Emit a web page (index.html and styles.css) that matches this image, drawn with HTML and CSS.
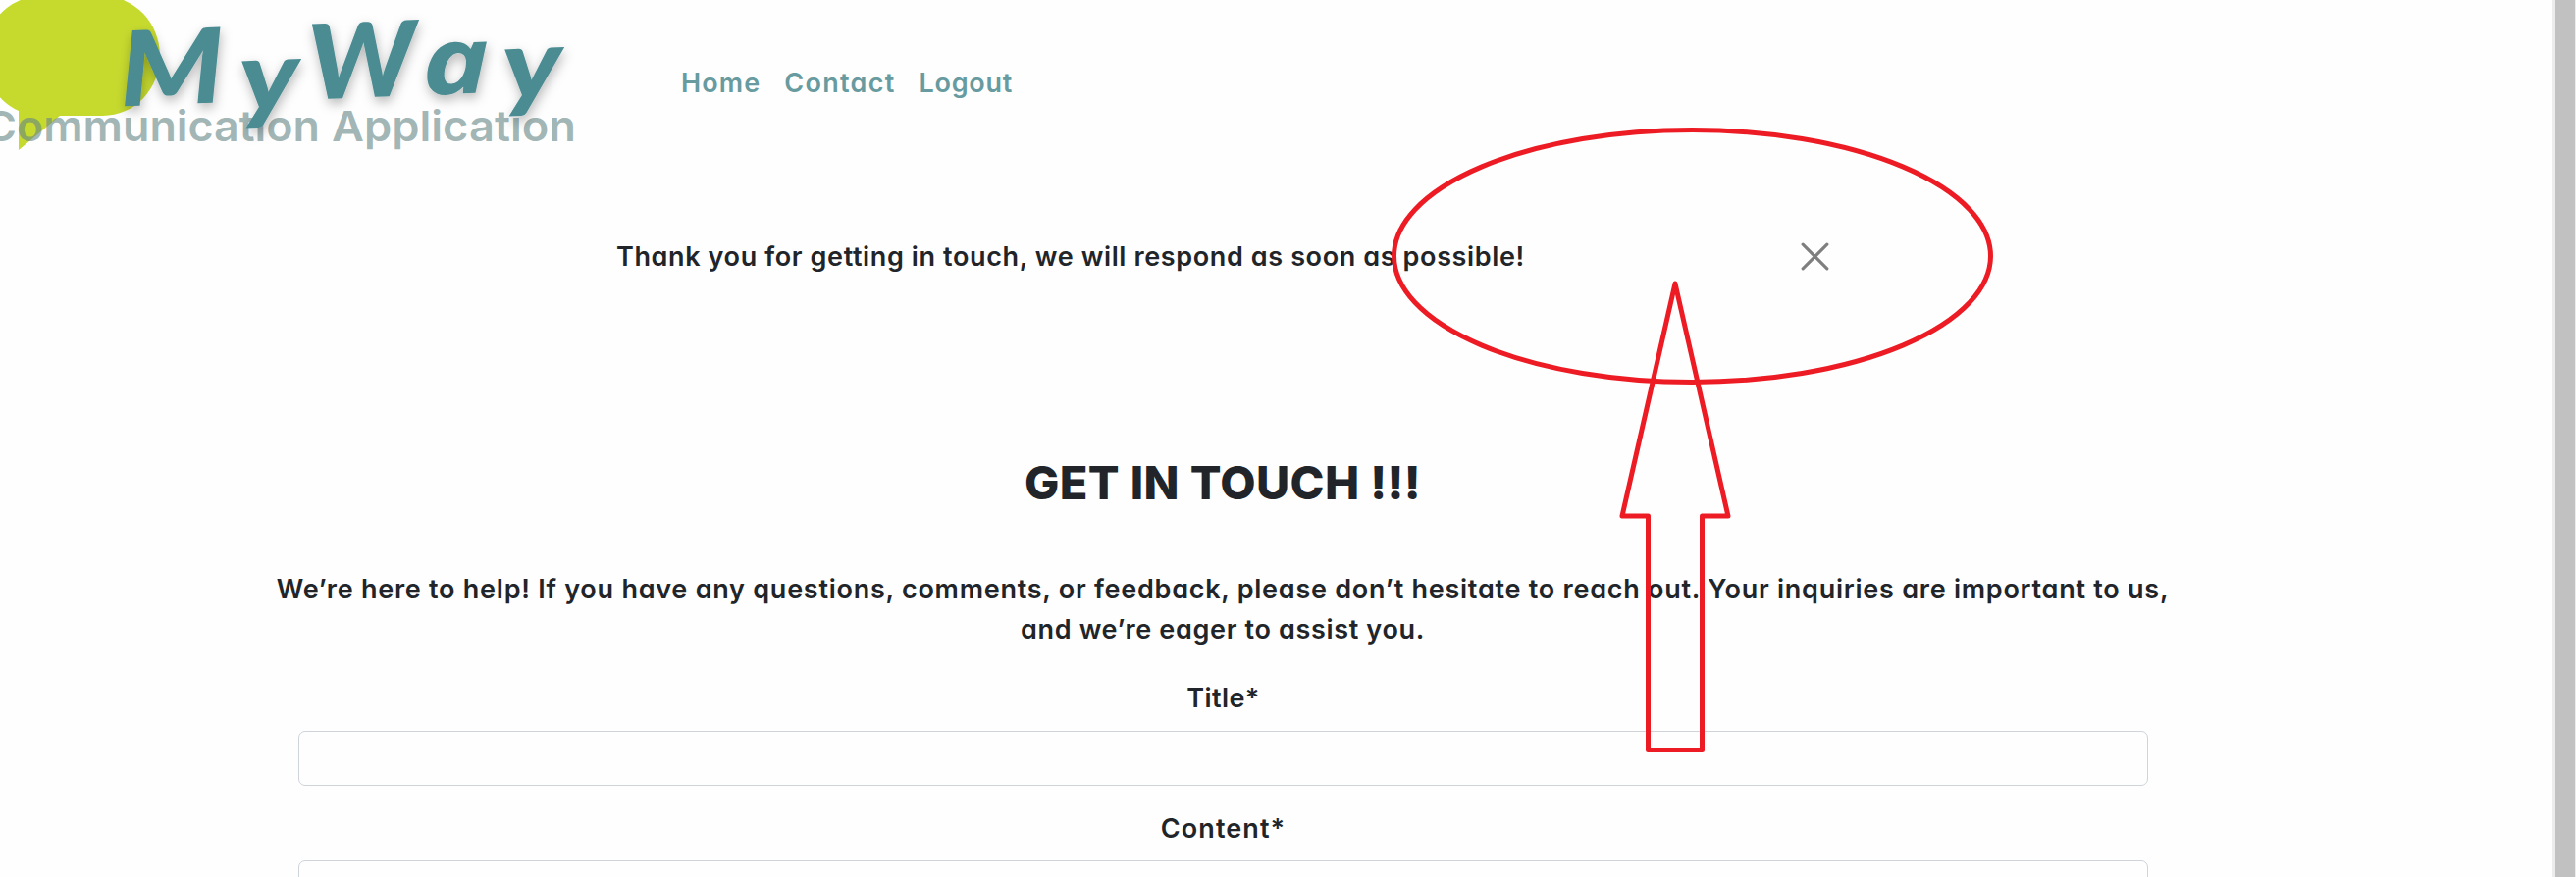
FILE: index.html
```html
<!DOCTYPE html>
<html lang="en">
<head>
<meta charset="utf-8">
<title>MyWay - Contact</title>
<link rel="stylesheet" href="styles.css">
</head>
<body>
<div class="page">
  <header class="header">
    <svg class="logo" width="600" height="168" viewBox="0 0 600 168" role="img" aria-label="MyWay Communication Application">
      <defs>
        <filter id="shade" x="-10%" y="-20%" width="120%" height="150%"><feDropShadow dx="1" dy="5" stdDeviation="6" flood-color="#000" flood-opacity=".28"/></filter>
      </defs>
      <path class="bubble" d="M45-4H105A58 61 0 0 1 105 118H61L19 153V113A58 61 0 0 1 45-4Z"/>
      <g class="tagline">
        <text x="-16" y="143.5" textLength="342" lengthAdjust="spacingAndGlyphs">Communication</text>
        <text x="338" y="143.5" textLength="249" lengthAdjust="spacingAndGlyphs">Application</text>
      </g>
      <g class="brand" filter="url(#shade)">
        <text transform="translate(123 108.5) rotate(-2.3)" textLength="107" lengthAdjust="spacingAndGlyphs">M</text>
        <text class="tail" transform="translate(245 114) rotate(-2.3)" textLength="61" lengthAdjust="spacingAndGlyphs">y</text>
        <text transform="translate(315 101.5) rotate(-2.3)" textLength="110" lengthAdjust="spacingAndGlyphs">W</text>
        <text class="round" transform="translate(431 97) rotate(-2.3)" textLength="69" lengthAdjust="spacingAndGlyphs">a</text>
        <text class="tail" transform="translate(513 102) rotate(-2.3)" textLength="61" lengthAdjust="spacingAndGlyphs">y</text>
      </g>
    </svg>
    <nav class="nav"><a class="home">Home</a><a class="contact">Contact</a><a class="logout">Logout</a></nav>
  </header>
  <section class="alert">
    <p class="message">Thank you for getting in touch, we will respond as soon as possible!</p>
    <svg class="close" viewBox="0 0 16 16"><path d="M.7.7 15.3 15.3M15.3.7.7 15.3"/></svg>
  </section>
  <main class="content">
    <h1 class="heading">GET IN TOUCH !!!</h1>
    <p class="intro"><span class="line one">We’re here to help! If you have any questions, comments, or feedback, please don’t hesitate to reach out. Your inquiries are important to us,</span><span class="line two">and we’re eager to assist you.</span></p>
    <form class="form">
      <label class="label title">Title*</label>
      <div class="field"></div>
      <label class="label body">Content*</label>
      <div class="field tall"></div>
    </form>
  </main>
</div>
<div class="scrollbar"><div class="thumb"></div></div>
<svg class="markup" width="640" height="660" viewBox="1400 120 640 660">
  <ellipse cx="1724.5" cy="261" rx="304" ry="128.5"/>
  <path d="M1707 289 1653 526H1679.5V764.5H1734.5V526H1761Z"/>
</svg>
</body>
</html>
```
FILE: styles.css
```css
* { box-sizing: border-box; }
body {
  margin: 0;
  height: 894px;
  display: flex;
  overflow: hidden;
  background: #fefefe;
  color: #212529;
  font: 600 27px/41px Inter, "Open Sans", sans-serif;
  font-feature-settings: "cv11";
}
p, h1 { margin: 0; }
.page { width: 2601px; height: 894px; overflow: hidden; }
.header { display: flex; height: 168px; }
.logo { flex: none; overflow: hidden; }
.bubble { fill: #c6da2e; }
.tagline { font: 600 43px Inter, sans-serif; fill: #648585; fill-opacity: .6; }
.brand { font: italic 900 106px Lato, sans-serif; fill: #4b8c92; }
.brand .round { font: italic 700 95px "Open Sans", sans-serif; }
.brand .tail { font-size: 100px; }
.nav { display: flex; gap: 24px; padding: 64px 0 0 94px; color: #679ba0; }
.home { letter-spacing: 1.1px; }
.contact { letter-spacing: 1.3px; }
.logout { letter-spacing: .7px; }
.alert { display: flex; align-items: center; height: 186px; padding: 0 0 0 628px; }
.message { width: 1208px; white-space: nowrap; letter-spacing: .62px; }
.close { width: 27px; height: 27px; overflow: visible; fill: none; stroke: #7f7f7f; stroke-width: 1.9; stroke-linecap: round; }
.content { width: 2492px; text-align: center; padding-top: 108px; }
.heading { font-size: 47px; font-weight: 800; line-height: 60px; letter-spacing: .4px; }
.intro { margin-top: 58px; }
.line { display: block; white-space: nowrap; }
.one { letter-spacing: .75px; }
.two { letter-spacing: .66px; }
.form { width: 1885px; margin: 29px 0 0 304px; }
.label { display: block; }
.title { letter-spacing: .4px; }
.body { letter-spacing: 1.1px; }
.field { height: 56px; margin: 13px 0 23px; border: 1px solid #ced4da; border-radius: 7px; }
.field.tall { height: 200px; margin-top: 12px; }
.scrollbar { width: 24px; height: 894px; padding: 0 1px 0 3px; background: #ececec; }
.thumb { height: 894px; background: #c1c1c1; }
.markup { position: absolute; left: 1400px; top: 120px; width: 640px; fill: none; stroke: #ed1c24; stroke-width: 5; stroke-linejoin: round; }
```
